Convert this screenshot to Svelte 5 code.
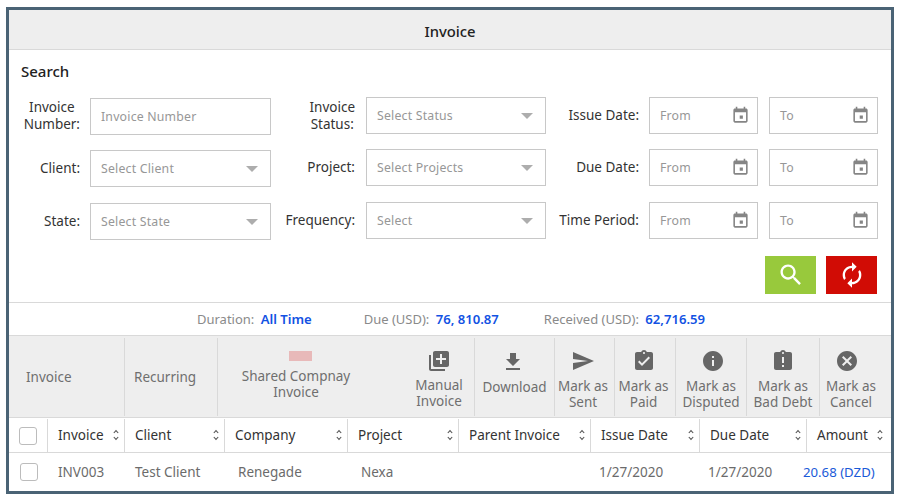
<script>
	const icons = {
		add: 'M4 6H2v14c0 1.1.9 2 2 2h14v-2H4V6zm16-4H8c-1.1 0-2 .9-2 2v12c0 1.1.9 2 2 2h12c1.1 0 2-.9 2-2V4c0-1.1-.9-2-2-2zm-1 9h-4v4h-2v-4H9V9h4V5h2v4h4v2z',
		download: 'M19 9h-4V3H9v6H5l7 7 7-7zM5 18v2h14v-2H5z',
		send: 'M2.01 21L23 12 2.01 3 2 10l15 2-15 2z',
		paid: 'M19 3h-4.18C14.4 1.84 13.3 1 12 1c-1.3 0-2.4.84-2.82 2H5c-1.1 0-2 .9-2 2v14c0 1.1.9 2 2 2h14c1.1 0 2-.9 2-2V5c0-1.1-.9-2-2-2zm-7 0c.55 0 1 .45 1 1s-.45 1-1 1-1-.45-1-1 .45-1 1-1zm-2 14l-4-4 1.41-1.41L10 14.17l6.59-6.59L18 9l-8 8z',
		info: 'M12 2C6.48 2 2 6.48 2 12s4.48 10 10 10 10-4.48 10-10S17.52 2 12 2zm1 15h-2v-6h2v6zm0-8h-2V7h2v2z',
		late: 'M19 3h-4.18C14.4 1.84 13.3 1 12 1c-1.3 0-2.4.84-2.82 2H5c-1.1 0-2 .9-2 2v14c0 1.1.9 2 2 2h14c1.1 0 2-.9 2-2V5c0-1.1-.9-2-2-2zm-6 15h-2v-2h2v2zm0-4h-2V8h2v6zm-1-9c-.55 0-1-.45-1-1s.45-1 1-1 1 .45 1 1-.45 1-1 1z',
		cancel: 'M12 2C6.47 2 2 6.47 2 12s4.47 10 10 10 10-4.47 10-10S17.53 2 12 2zm5 13.59L15.59 17 12 13.41 8.41 17 7 15.59 10.59 12 7 8.41 8.41 7 12 10.59 15.59 7 17 8.41 13.41 12 17 15.59z'
	}
	const calendar = 'M19 3h-1V1h-2v2H8V1H6v2H5c-1.11 0-1.99.9-1.99 2L3 19c0 1.1.89 2 2 2h14c1.1 0 2-.9 2-2V5c0-1.1-.9-2-2-2zm0 16H5V8h14v11zM11 12h4v4h-4z'

	const rows = [
		{ l1: ['Invoice', 'Number:'], kind: 'input', ph: 'Invoice Number', l2: ['Invoice', 'Status:'], ph2: 'Select Status', l3: 'Issue Date:' },
		{ l1: ['Client:'], kind: 'select', ph: 'Select Client', l2: ['Project:'], ph2: 'Select Projects', l3: 'Due Date:' },
		{ l1: ['State:'], kind: 'select', ph: 'Select State', l2: ['Frequency:'], ph2: 'Select', l3: 'Time Period:' }
	]

	const actions = [
		{ icon: 'add', lines: ['Manual', 'Invoice'], w: 71, cls: 'manual' },
		{ icon: 'download', lines: ['Download'], w: 80, cls: 'dl' },
		{ icon: 'send', lines: ['Mark as', 'Sent'], w: 60, cls: 'nudge' },
		{ icon: 'paid', lines: ['Mark as', 'Paid'], w: 61, cls: 'nudge' },
		{ icon: 'info', lines: ['Mark as', 'Disputed'], w: 71, cls: 'disputed' },
		{ icon: 'late', lines: ['Mark as', 'Bad Debt'], w: 73, cls: '' },
		{ icon: 'cancel', lines: ['Mark as', 'Cancel'], w: 62, cls: 'last' }
	]

	const cols = ['Invoice', 'Client', 'Company', 'Project', 'Parent Invoice', 'Issue Date', 'Due Date', 'Amount']
</script>

<div class="page">
	<div class="panel">
		<header class="title">Invoice</header>

		<section class="search">
			<h2>Search</h2>
			<div class="form">
				{#each rows as row}
					<div class="label first" class:two={row.l1.length > 1}>
						<span>{#each row.l1 as line}{line}<br />{/each}</span>
					</div>
					<div class="field first">
						<span class="ph">{row.ph}</span>
						{#if row.kind === 'select'}<i class="caret"></i>{/if}
					</div>
					<div class="label second">
						<span>{#each row.l2 as line}{line}<br />{/each}</span>
					</div>
					<div class="field">
						<span class="ph">{row.ph2}</span>
						<i class="caret"></i>
					</div>
					<div class="label third"><span>{row.l3}</span></div>
					<div class="dates">
						{#each ['From', 'To'] as d}
							<div class="field">
								<span class="ph">{d}</span>
								<svg class="cal" viewBox="0 0 24 24"><path d={calendar} /></svg>
							</div>
						{/each}
					</div>
				{/each}
			</div>
			<div class="buttons">
				<button class="go" aria-label="Search">
					<svg viewBox="0 0 24 24"><path d="M15.5 14h-.79l-.28-.27C15.41 12.59 16 11.11 16 9.5 16 5.91 13.09 3 9.5 3S3 5.91 3 9.5 5.91 16 9.5 16c1.61 0 3.09-.59 4.23-1.57l.27.28v.79l5 4.99L20.49 19l-4.99-5zm-6 0C7.01 14 5 11.99 5 9.5S7.01 5 9.5 5 14 7.01 14 9.5 11.99 14 9.5 14z" /></svg>
				</button>
				<button class="reset" aria-label="Reset">
					<svg viewBox="0 0 24 24"><path transform="matrix(-1 0 0 1 24 0)" d="M12 4V1L8 5l4 4V6c3.31 0 6 2.69 6 6 0 1.01-.25 1.97-.7 2.8l1.46 1.46C19.54 15.03 20 13.57 20 12c0-4.42-3.58-8-8-8zm0 14c-3.31 0-6-2.69-6-6 0-1.01.25-1.97.7-2.8L5.24 7.74C4.46 8.97 4 10.43 4 12c0 4.42 3.58 8 8 8v3l4-4-4-4v3z" /></svg>
				</button>
			</div>
		</section>

		<div class="summary">
			<div class="pair"><span>Duration:</span> <b>All Time</b></div>
			<div class="pair"><span>Due (USD):</span> <b>76, 810.87</b></div>
			<div class="pair"><span>Received (USD):</span> <b>62,716.59</b></div>
		</div>

		<div class="toolbar">
			<div class="tool text invoice">Invoice</div>
			<div class="tool text recurring">Recurring</div>
			<div class="tool shared">
				<i class="swatch"></i>
				<span>Shared Compnay<br />Invoice</span>
			</div>
			{#each actions as a}
				<div class="tool action {a.cls}" style:width="{a.w}px">
					<svg viewBox="0 0 24 24"><path d={icons[a.icon]} /></svg>
					<span>{#each a.lines as line}{line}<br />{/each}</span>
				</div>
			{/each}
		</div>

		<div class="grid head">
			<div class="cell check"><i class="box"></i></div>
			{#each cols as c}
				<div class="cell">
					<span>{c}</span>
					<svg class="sort" viewBox="0 0 6 12"><path d="M.8 4L3 1.6 5.2 4M.8 8L3 10.4 5.2 8" /></svg>
				</div>
			{/each}
		</div>

		<div class="grid row">
			<div class="cell check"><i class="box"></i></div>
			<div class="cell">INV003</div>
			<div class="cell">Test Client</div>
			<div class="cell shift">Renegade</div>
			<div class="cell shift">Nexa</div>
			<div class="cell"></div>
			<div class="cell date">1/27/2020</div>
			<div class="cell date">1/27/2020</div>
			<div class="cell amount">20.68 (DZD)</div>
		</div>
	</div>
</div>

<style>
	:global(body) {
		background: #fff;
		font-family: 'Noto Sans', 'Open Sans', sans-serif;
	}

	.page {
		width: 900px;
		height: 500px;
		padding: 7px 6px 6px;
		box-sizing: border-box;
	}

	.panel {
		width: 888px;
		height: 487px;
		box-sizing: border-box;
		border: 3px solid #4a6375;
		overflow: hidden;
		color: #333;
		font-size: 13.5px;
	}

	.title {
		height: 39px;
		line-height: 42px;
		background: #eee;
		border-bottom: 1px solid #d9d9d9;
		text-align: center;
		font-size: 14.8px;
		font-weight: 500;
		color: #222;
	}

	.search {
		height: 252px;
		padding: 0 12px;
		border-bottom: 1px solid #d9d9d9;
		display: flex;
		flex-direction: column;
	}

	h2 {
		margin: 11px 0 16px;
		height: 20px;
		line-height: 20px;
		font-size: 15px;
		font-weight: 500;
		color: #222;
	}

	.form {
		display: grid;
		grid-template-columns: 59px 181px 75px 180px 83px 229px;
		column-gap: 10px;
		grid-template-rows: 52px 53px 37px;
	}

	.label {
		display: flex;
		justify-content: flex-end;
		height: 37px;
		align-items: center;
		text-align: center;
		line-height: 17px;
		color: #333;
		white-space: nowrap;
	}

	.label.first {
		margin-top: 1px;
	}

	.label.first.two {
		margin-top: 0;
	}

	.label.second {
		margin-right: 1px;
	}

	.field {
		position: relative;
		height: 37px;
		box-sizing: border-box;
		border: 1px solid #c8c8c8;
		display: flex;
		align-items: center;
		padding-left: 10px;
		background: #fff;
		min-width: 0;
	}

	.field.first {
		margin-top: 1px;
	}

	.ph {
		color: #979797;
		font-size: 12.3px;
		letter-spacing: 0.2px;
	}

	.caret {
		position: absolute;
		right: 12px;
		top: 15px;
		width: 0;
		height: 0;
		border-left: 6px solid transparent;
		border-right: 6px solid transparent;
		border-top: 6px solid #adadad;
	}

	.dates {
		display: grid;
		grid-template-columns: 109px 109px;
		column-gap: 11px;
	}

	.cal {
		position: absolute;
		right: 7px;
		top: 8px;
		width: 19px;
		height: 19px;
		fill: #858585;
	}

	.buttons {
		display: flex;
		justify-content: flex-end;
		gap: 10px;
		margin-top: 17px;
		margin-right: 2px;
	}

	button {
		width: 51px;
		height: 38px;
		border: 0;
		padding: 0;
		display: flex;
		align-items: center;
		justify-content: center;
	}

	button svg {
		width: 28px;
		height: 28px;
		fill: #fff;
	}

	.go {
		background: #98c93c;
	}

	.reset {
		background: #d10c05;
	}

	.summary {
		height: 32px;
		border-bottom: 1px solid #d9d9d9;
		display: flex;
		justify-content: center;
		align-items: center;
		gap: 45px;
		padding-left: 2px;
		font-size: 13px;
	}

	.pair:first-child {
		margin-right: 7px;
	}

	.summary span {
		color: #8a8a8a;
		margin-right: 3px;
	}

	.summary b {
		color: #1252e3;
		font-weight: 600;
		font-size: 13.1px;
	}

	.toolbar {
		background: #eee;
		border-bottom: 1px solid #d9d9d9;
		display: flex;
		padding: 2px 0 1px;
		height: 78px;
		color: #6f6f6f;
	}

	.tool {
		box-sizing: border-box;
		border-right: 1px solid #d9d9d9;
		flex: none;
		line-height: 16px;
		text-align: center;
	}

	.text {
		display: flex;
		align-items: center;
		padding-bottom: 1px;
	}

	.invoice {
		width: 116px;
		padding-left: 17px;
	}

	.recurring {
		width: 93px;
		padding-left: 9px;
	}

	.shared {
		width: 186px;
		border-right: 0;
		padding-right: 30px;
		display: flex;
		flex-direction: column;
		align-items: center;
	}

	.swatch {
		width: 23px;
		height: 10px;
		margin: 13px 0 7px 8px;
		background: #e8b9b9;
	}

	.action {
		display: flex;
		flex-direction: column;
		align-items: center;
		white-space: nowrap;
	}

	.action svg {
		width: 24px;
		height: 24px;
		margin-top: 11px;
		margin-bottom: 5px;
		fill: #666;
		flex: none;
	}

	.action.manual svg {
		margin-bottom: 4px;
	}

	.action.dl svg {
		margin-top: 12px;
		margin-right: 3px;
	}

	.action.nudge {
		padding-right: 3px;
	}

	.action.disputed svg {
		margin-left: 3px;
	}

	.action.last {
		border-right: 0;
	}

	.action.last svg {
		margin-right: 8px;
	}

	.grid {
		display: grid;
		grid-template-columns: 39px 77px 100px 123px 111px 132px 109px 107px 84px;
	}

	.head {
		height: 34px;
		border-bottom: 1px solid #d9d9d9;
	}

	.head .cell {
		border-right: 1px solid #d9d9d9;
		justify-content: space-between;
		padding: 0 5px 2px 10px;
		margin-top: 1px;
		color: #333;
		white-space: nowrap;
	}

	.head .cell:last-child {
		border-right: 0;
		padding-right: 8px;
	}

	.cell {
		display: flex;
		align-items: center;
		box-sizing: border-box;
		min-width: 0;
	}

	.head .cell.check,
	.row .cell.check {
		padding: 0;
		justify-content: center;
	}

	.box {
		width: 16px;
		height: 16px;
		border: 1px solid #bcbcbc;
		border-radius: 3px;
		background: #fff;
	}

	.sort {
		width: 6px;
		height: 12px;
		fill: none;
		stroke: #555;
		stroke-width: 1.1;
		flex: none;
	}

	.row {
		height: 38px;
		color: #6b6b6b;
	}

	.row .cell {
		padding-left: 10px;
		white-space: nowrap;
	}

	.row .cell.shift {
		padding-left: 13px;
	}

	.row .cell.date {
		padding-left: 8px;
	}

	.row .cell.amount {
		padding-left: 0;
		margin-left: -4px;
		color: #1a5ad8;
		font-size: 13.2px;
	}
</style>
